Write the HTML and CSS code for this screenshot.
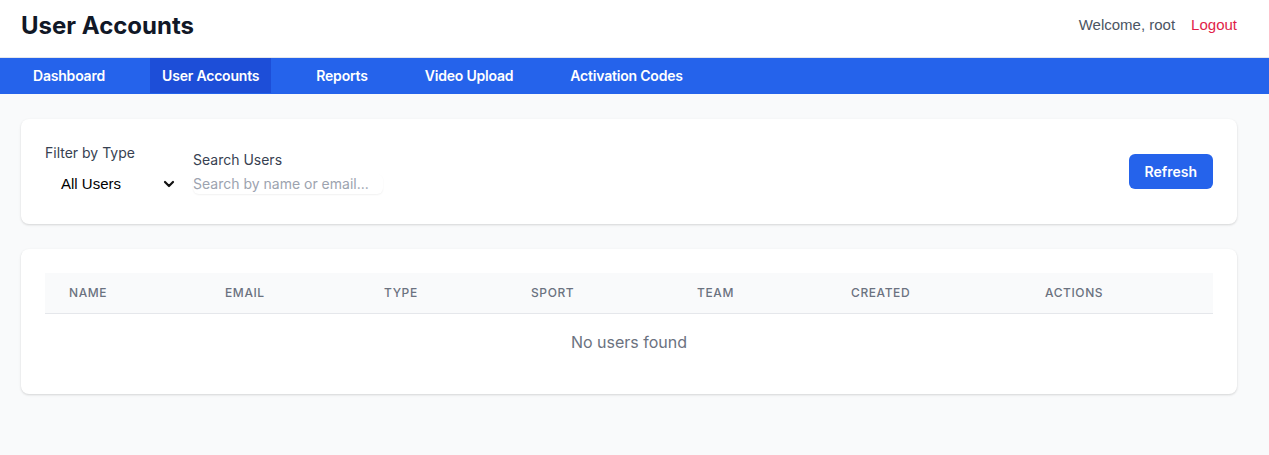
FILE: index.html
```html
<!DOCTYPE html>
<html>
<head>
<meta charset="utf-8">
<link rel="stylesheet" href="styles.css">
</head>
<body>
<header class="topbar">
  <h1 class="title">User Accounts</h1>
  <div class="user">
    <span class="welcome">Welcome, root</span>
    <a class="logout">Logout</a>
  </div>
</header>
<nav class="nav">
  <a class="tab">Dashboard</a>
  <a class="tab active">User Accounts</a>
  <a class="tab">Reports</a>
  <a class="tab">Video Upload</a>
  <a class="tab">Activation Codes</a>
</nav>
<main class="main">
  <section class="card filters">
    <div class="field">
      <label class="label">Filter by Type</label>
      <div class="select">
        <span class="select-text">All Users</span>
        <svg class="chev" width="12" height="8" viewBox="0 0 12 8"><path d="M2 2l4 4 4-4" fill="none" stroke="#111" stroke-width="2.2" stroke-linecap="round" stroke-linejoin="round"/></svg>
      </div>
    </div>
    <div class="field">
      <label class="label">Search Users</label>
      <input class="search" placeholder="Search by name or email...">
    </div>
    <button class="btn">Refresh</button>
  </section>
  <section class="card">
    <table class="table">
      <thead>
        <tr>
          <th class="c1">Name</th>
          <th class="c2">Email</th>
          <th class="c3">Type</th>
          <th class="c4">Sport</th>
          <th class="c5">Team</th>
          <th class="c6">Created</th>
          <th class="c7">Actions</th>
        </tr>
      </thead>
      <tbody>
        <tr><td class="empty" colspan="7">No users found</td></tr>
      </tbody>
    </table>
  </section>
</main>
</body>
</html>
```
FILE: styles.css
```css
* { box-sizing: border-box; }
html, body { margin: 0; padding: 0; }
body {
  font-family: Inter, "Noto Sans", sans-serif;
  background: #f9fafb;
  color: #111827;
  width: 1269px;
  height: 455px;
  overflow: hidden;
}
.topbar {
  height: 58px;
  background: #fff;
  border-bottom: 1px solid #e5e7eb;
  display: flex;
  align-items: center;
  justify-content: space-between;
  padding: 0 20px 0 21px;
}
.title {
  margin: -6px 0 0;
  font-size: 24px;
  line-height: 32px;
  font-weight: 700;
  color: #111827;
}
.user {
  display: flex;
  align-items: center;
  gap: 4px;
  font-family: "Liberation Sans", Arial, sans-serif;
  font-size: 15px;
  margin-top: -8px;
}
.welcome { color: #4b5563; }
.logout { color: #e11d48; padding: 0 12px; }
.nav {
  height: 36px;
  background: #2563eb;
  display: flex;
  gap: 33px;
  padding-left: 21px;
  padding-bottom: 1px;
}
.tab {
  display: flex;
  align-items: center;
  padding: 0 12px;
  color: #fff;
  font-size: 14px;
  font-weight: 600;
  letter-spacing: -0.2px;
}
.tab.active { background: #1d4ed8; }
.main {
  padding: 25px 32px 0 21px;
  display: flex;
  flex-direction: column;
  gap: 25px;
}
.card {
  background: #fff;
  border-radius: 8px;
  box-shadow: 0 1px 3px rgba(0,0,0,0.1), 0 1px 2px rgba(0,0,0,0.06);
  padding: 24px;
}
.filters {
  display: flex;
  align-items: center;
  gap: 10px;
  height: 105px;
}
.field { display: flex; flex-direction: column; }
.label {
  font-size: 14px;
  line-height: 20px;
  color: #374151;
  margin-bottom: 4px;
}
.select {
  width: 138px;
  height: 33px;
  display: flex;
  align-items: center;
  justify-content: space-between;
  padding: 0 8px 0 16px;
  font-family: "Liberation Sans", Arial, sans-serif;
  font-size: 15px;
  color: #000;
}
.chev { margin-top: 1px; }
.search {
  width: 190px;
  height: 20px;
  border: none;
  border-radius: 6px;
  padding: 0;
  font-family: Inter, sans-serif;
  font-size: 14px;
  color: #111827;
  box-shadow: 0 1px 2px rgba(0,0,0,0.06);
  outline: none;
}
.search::placeholder { color: #9ca3af; }
.btn {
  margin-left: auto;
  height: 35px;
  padding: 0 16px;
  border: none;
  border-radius: 6px;
  background: #2563eb;
  color: #fff;
  font-family: Inter, sans-serif;
  font-size: 14px;
  font-weight: 600;
}
.table {
  width: 100%;
  border-collapse: collapse;
}
th {
  background: #f9fafb;
  text-align: left;
  padding: 12px 24px;
  font-size: 12px;
  line-height: 16px;
  font-weight: 500;
  letter-spacing: 0.05em;
  text-transform: uppercase;
  color: #6b7280;
  border-bottom: 1px solid #e5e7eb;
}
.c1 { width: 156px; }
.c2 { width: 159px; }
.c3 { width: 147px; }
.c4 { width: 166px; }
.c5 { width: 154px; }
.c6 { width: 194px; }
.c7 { width: 192px; }
.empty {
  text-align: center;
  padding: 16px 24px;
  font-size: 16px;
  line-height: 24px;
  color: #6b7280;
}
```
